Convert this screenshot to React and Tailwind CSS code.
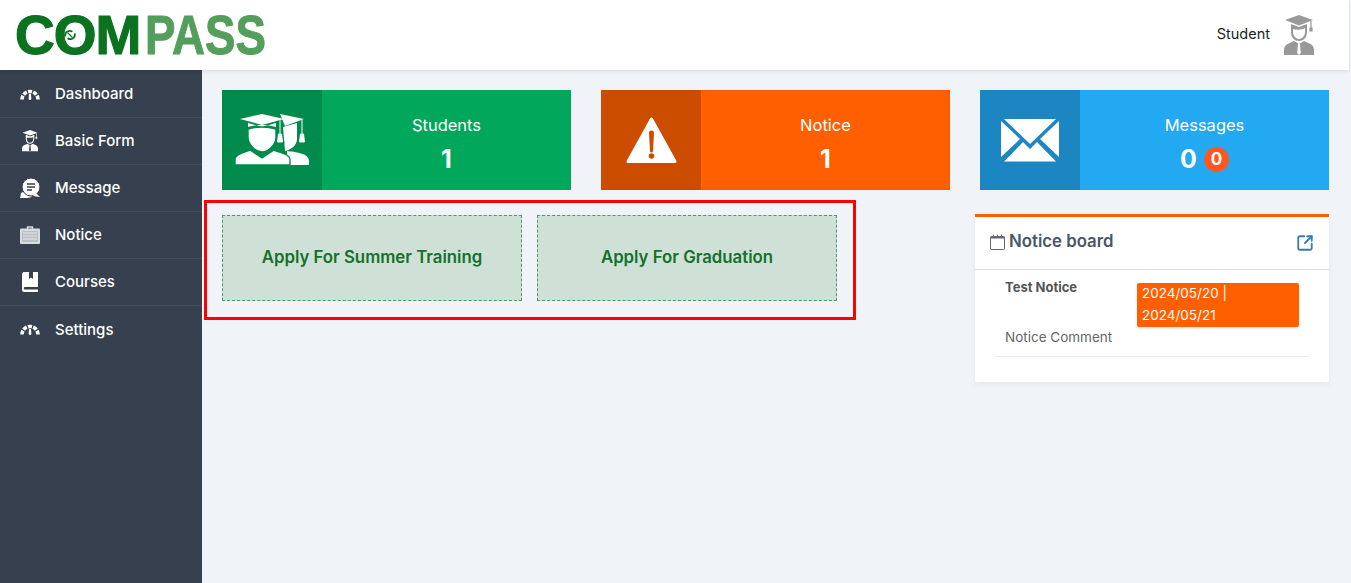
import React from 'react';
import { SquareArrowOutUpRight } from 'lucide-react';

function Gauge() {
  return (
    <svg width="20" height="13" viewBox="0 0 20 13" fill="none">
      <path d="M2 11.5A8 8 0 0 1 18 11.5" stroke="#fff" strokeWidth="3.6" pathLength="100" strokeDasharray="16 5" />
      <path d="M9 6 L11 6 L11.4 11 A1.5 1.5 0 0 1 8.6 11 Z" fill="#fff" />
    </svg>
  );
}

function GradPerson({ size = 30, color = '#fff', cut = '#36404e' }) {
  return (
    <svg width={size} height={size * 4 / 3} viewBox="0 0 30 40">
      <path d="M15 0 L29 5 L15 10.5 L1 5 Z" fill={color} />
      <path d="M27 6 V13 M26 13 h2 v3 h-2 Z" stroke={color} strokeWidth="1.2" fill={color} />
      <path d="M7 9 L15 12 L23 9 V17 C23 23 19 26 15 26 C11 26 7 23 7 17 Z" fill={color} />
      <path d="M9 14 C12 15 18 15 21 13 V17 C21 21 18 24 15 24 C12 24 9 21 9 17 Z" fill={cut} />
      <path d="M0 40 V35 C0 29 6 28 10 26 L15 29 L20 26 C24 28 30 29 30 35 V40 Z" fill={color} />
      <path d="M14 29 H16 L16.8 38 L15 40 L13.2 38 Z" fill={cut} />
    </svg>
  );
}

function Chat() {
  return (
    <svg width="20" height="20" viewBox="0 0 20 20">
      <path d="M1 15 C0.5 17 0.5 19 0 20 L7 20 C10 20 12 19 13 17 L5 13 Z" fill="#fff" />
      <circle cx="11" cy="9" r="9" fill="#fff" stroke="#36404e" strokeWidth="1" />
      <path d="M16 15 L20 19 L13 18 Z" fill="#fff" />
      <path d="M7 6 H15 M7 9 H15 M7 12 H12" stroke="#36404e" strokeWidth="1.6" />
    </svg>
  );
}

function Board() {
  return (
    <svg width="20" height="18" viewBox="0 0 20 18">
      <path d="M7.5 3 V1 H12.5 V3" fill="none" stroke="#d9dcdf" strokeWidth="1.4" />
      <rect x="0" y="2.5" width="20" height="15.5" rx="1" fill="#d9dcdf" />
      <rect x="2" y="5" width="16" height="11" fill="#b9bec4" />
      <path d="M3 7 H17 M3 10 H17 M3 13 H17" stroke="#e7e9eb" strokeWidth="1.2" />
    </svg>
  );
}

function Book() {
  return (
    <svg width="16" height="20" viewBox="0 0 16 20">
      <path d="M2 0 H7 V7 L9 5.5 L11 7 V0 H16 V15 H2.5 C1.5 15 1.5 17.5 2.5 17.5 H16 V19 C16 19.6 15.6 20 15 20 H2 C1 20 0 19 0 18 V2 C0 1 1 0 2 0 Z" fill="#fff" />
    </svg>
  );
}

function Students({ cut }) {
  return (
    <svg width="75" height="52" viewBox="0 0 75 52">
      <path d="M45 0 L69 5 L50 12 Z" fill="#fff" />
      <path d="M67 6 V20 M65.5 20 h3 l1 8 h-5 Z" stroke="#fff" strokeWidth="1" fill="#fff" />
      <path d="M48 13 L62 9 V25 C62 31 56 36 50 37 Z" fill="#fff" />
      <path d="M52 37 C60 38 74 39 74 47 V51 H52 Z" fill="#fff" />
      <path d="M27 0 L49 5 L27 11 L5 5 Z" fill="#fff" />
      <path d="M45 6 V20 M43.5 20 h3 l1.5 8 h-6 Z" stroke={cut} strokeWidth="2.5" fill={cut} />
      <path d="M45 6 V20 M43.5 20 h3 l1 8 h-5 Z" stroke="#fff" strokeWidth="1" fill="#fff" />
      <path d="M13 9 L27 13 L41 9 V13 Q27 9 13 13 Z" fill="#fff" />
      <path d="M13 15 Q27 11 41 15 V23 C41 31 33 38 27 38 C21 38 13 31 13 23 Z" fill="#fff" stroke={cut} strokeWidth="1.4" />
      <path d="M0 51 V46 C0 40 8 39 15 36 L27 44 L39 36 C46 39 55 40 55 46 V51 Z" fill="#fff" stroke={cut} strokeWidth="1.4" />
    </svg>
  );
}

function Warning({ cut }) {
  return (
    <svg width="51" height="47" viewBox="0 0 51 47">
      <path d="M25.5 2 L49 44.5 H2 Z" fill="#fff" stroke="#fff" strokeWidth="3" strokeLinejoin="round" />
      <path d="M23 16 a2.5 2.5 0 0 1 5 0 L27 34 a1.5 1.5 0 0 1 -3 0 Z" fill={cut} />
      <circle cx="25.5" cy="39" r="2.8" fill={cut} />
    </svg>
  );
}

function Envelope() {
  return (
    <svg width="58" height="43" viewBox="0 0 58 43" fill="#fff">
      <path d="M3 0 H55 L29 25 Z" />
      <path d="M0 2 V38 L19 20 Z" />
      <path d="M58 2 V38 L39 20 Z" />
      <path d="M3 42.5 L22 23 L29 30 L36 23 L55 42.5 Z" />
    </svg>
  );
}

function Calendar() {
  return (
    <svg width="15" height="16" viewBox="0 0 15 16" fill="none">
      <rect x="0.5" y="2.5" width="14" height="13" rx="1" stroke="#6a6478" />
      <rect x="0.5" y="2.5" width="14" height="2" fill="#6a6478" />
      <path d="M3.5 0.5 V3.5 M7.5 0.5 V3.5 M11.5 0.5 V3.5" stroke="#6a6478" />
    </svg>
  );
}

const menuItems = [
  { label: 'Dashboard', icon: <Gauge /> },
  { label: 'Basic Form', icon: <GradPerson size={16} /> },
  { label: 'Message', icon: <Chat /> },
  { label: 'Notice', icon: <Board /> },
  { label: 'Courses', icon: <Book /> },
  { label: 'Settings', icon: <Gauge /> },
];

function StatCard({ title, value, icon, dark, light, badge }) {
  return (
    <div className={`flex h-[100px] ${light}`}>
      <div className={`flex w-[100px] items-center justify-center ${dark}`}>{icon}</div>
      <div className="flex flex-1 flex-col items-center pt-[23px] text-white">
        <div className="text-[16.5px] leading-[24px]">{title}</div>
        <div className="mt-[4px] flex items-center gap-[7px] text-[25px] font-bold leading-[36px]">
          {value}
          {badge && (
            <span className="flex h-[25px] w-[25px] items-center justify-center rounded-full bg-[#ff5722] text-[17px] font-bold">
              {badge}
            </span>
          )}
        </div>
      </div>
    </div>
  );
}

function ApplyCard({ label }) {
  return (
    <div className="flex h-[86px] w-[300px] items-center justify-center border border-dashed border-[#4f9a5c] bg-[#cfe0d6] text-[16.8px] font-semibold text-[#14702a]">
      {label}
    </div>
  );
}

export default function App() {
  return (
    <div className="flex h-screen flex-col overflow-hidden bg-[#f0f3f8] font-['Inter',sans-serif]">
      <header className="z-10 mr-[2px] flex h-[70px] shrink-0 items-center justify-between bg-white pl-[15px] pr-[35px] shadow-[0_1px_4px_rgba(0,0,0,0.1)]">
        <div className="relative flex h-[50px] items-center font-['Liberation_Sans',sans-serif] text-[55px] font-bold leading-[50px]">
          <span className="tracking-[-1px] text-[#0b7320] [-webkit-text-stroke:1.2px_#0b7320]">COM</span>
          <span className="ml-[5px] inline-block w-[123px] origin-left scale-x-[0.83] text-[#549e5c] [-webkit-text-stroke:1px_#549e5c]">PASS</span>
          <svg className="absolute left-[47px] top-[17px]" width="16" height="16" viewBox="0 0 20 20" fill="none">
            <path d="M4 12 C3 6 9 3 13 6 M16 8 C17 14 11 17 7 14" stroke="#0b7320" strokeWidth="2.2" />
            <path d="M7 7 L10 10 L13 13" stroke="#0b7320" strokeWidth="1.6" />
          </svg>
        </div>
        <div className="flex items-center gap-[14px]">
          <span className="pb-[2px] text-[14.5px] text-[#222]">Student</span>
          <GradPerson size={30} color="#999" cut="#fff" />
        </div>
      </header>

      <div className="flex flex-1">
        <aside className="w-[202px] shrink-0 bg-[#36404e] pt-[1px]">
          {menuItems.map((item) => (
            <div key={item.label} className="flex h-[47px] items-center border-b border-[#414c5c] pl-[20px] last:border-b-0">
              <div className="flex w-[20px] justify-center">{item.icon}</div>
              <span className="ml-[15px] pt-[1px] text-[15px] font-medium text-white">{item.label}</span>
            </div>
          ))}
        </aside>

        <main className="flex-1 pl-[2px] pr-[22px] pt-[20px]">
          <div className="ml-[18px] grid grid-cols-3 gap-[30px]">
            <StatCard title="Students" value="1" light="bg-[#01a85b]" dark="bg-[#008a4b]" icon={<Students cut="#008a4b" />} />
            <StatCard title="Notice" value="1" light="bg-[#ff5f00]" dark="bg-[#cc4c00]" icon={<Warning cut="#cc4c00" />} />
            <StatCard title="Messages" value="0" badge="0" light="bg-[#23a8f2]" dark="bg-[#1c86c2]" icon={<Envelope />} />
          </div>

          <div className="mt-[10px] flex items-start justify-between">
            <div className="flex h-[120px] w-[652px] gap-[15px] border-[3px] border-[#f00] pl-[15px] pt-[12px]">
              <ApplyCard label="Apply For Summer Training" />
              <ApplyCard label="Apply For Graduation" />
            </div>

            <div className="mt-[14px] h-[168px] w-[354px] border-t-[3px] border-[#ff5f00] bg-white shadow-[0_2px_6px_rgba(0,0,0,0.06)]">
              <div className="flex h-[53px] items-center justify-between border-b border-[#ddd] pl-[15px] pr-[15px]">
                <div className="flex items-center gap-[4px] pb-[2px] text-[16.8px] font-semibold text-[#4a5668]">
                  <Calendar />
                  Notice board
                </div>
                <SquareArrowOutUpRight size={18} color="#337ab7" strokeWidth={2.4} />
              </div>
              <div className="mx-[20px] border-b border-[#eee] px-[10px] pb-[9px] pt-[13px]">
                <div className="flex items-start">
                  <div className="w-[132px] text-[13px] font-bold leading-[8px] text-[#555]">Test Notice</div>
                  <div className="w-[162px] rounded-[2px] bg-[#ff5f00] px-[5px] pb-[1px] text-[13.5px] leading-[21.5px] text-white shadow-sm">
                    2024/05/20 | 2024/05/21
                  </div>
                </div>
                <div className="text-[13.5px] leading-[20px] text-[#666]">Notice Comment</div>
              </div>
            </div>
          </div>
        </main>
      </div>
    </div>
  );
}
